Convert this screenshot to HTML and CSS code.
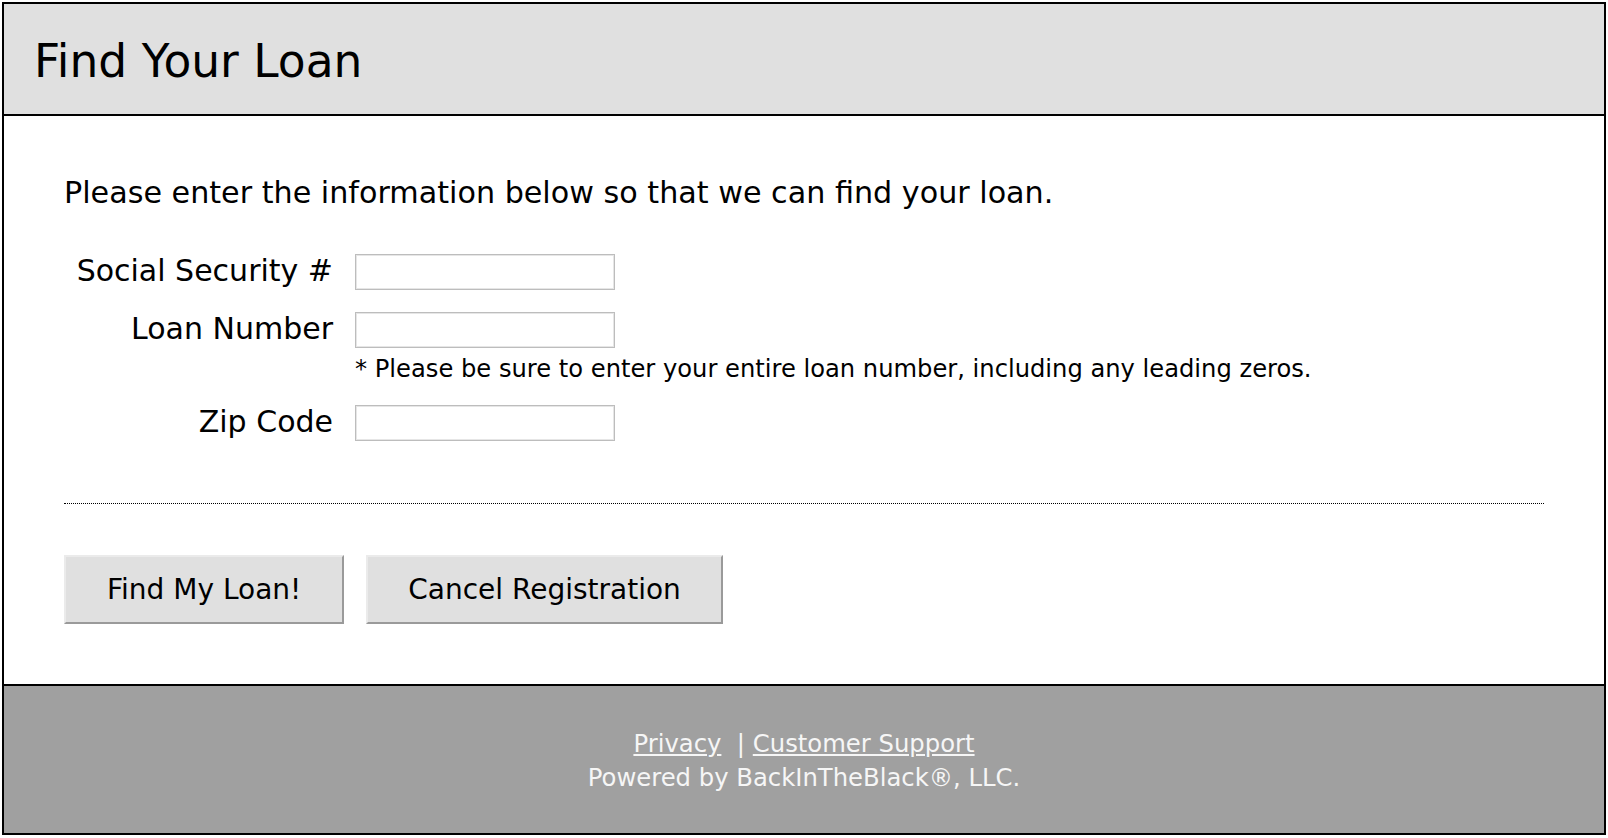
FILE: index.html
```html
<!DOCTYPE html>
<html lang="en">

<head>
    <meta charset="UTF-8">
    <meta name="viewport" content="width=device-width, initial-scale=1.0">
    <title>Find Your Loan</title>
    <link rel="stylesheet" href="styles.css">
</head>

<body>
    <div class="page">
        <div class="page_header">
            <h1>Find Your Loan</h1>
        </div>

        <form class="page_main" action="">
            <p class="intro">Please enter the information below so that we can find your loan.</p>

            <div class="fields">
                <label class="field_label" for="ssn">Social Security #</label>
                <div class="field_input">
                    <input type="text" id="ssn" name="ssn">
                </div>

                <label class="field_label" for="loan">Loan Number</label>
                <div class="field_input">
                    <input type="text" id="loan" name="loan">
                    <div class="field_note">* Please be sure to enter your entire loan number, including any leading zeros.</div>
                </div>

                <label class="field_label" for="zip">Zip Code</label>
                <div class="field_input">
                    <input type="text" id="zip" name="zip">
                </div>
            </div>

            <hr class="divider">

            <div class="buttons">
                <button type="submit" class="btn">Find My Loan!</button>
                <button type="button" class="btn">Cancel Registration</button>
            </div>
        </form>

        <div class="page_footer">
            <div><a href="#">Privacy</a>&nbsp; | <a href="#">Customer Support</a></div>
            <div>Powered by BackInTheBlack&reg;, LLC.</div>
        </div>
    </div>
</body>

</html>
```

FILE: styles.css
```css
* {
    box-sizing: border-box;
}

body {
    margin: 2px;
    font-family: "DejaVu Sans", Verdana, sans-serif;
    color: #000;
    background-color: #fff;
}

.page {
    height: 833px;
    border: 2px solid #000;
    display: flex;
    flex-direction: column;
}

.page_header {
    height: 112px;
    background-color: #e0e0e0;
    border-bottom: 2px solid #000;
    padding: 32px 30px 0;
}

.page_header h1 {
    margin: 0;
    font-size: 45.5px;
    font-weight: normal;
    line-height: 51px;
}

.page_main {
    flex: 1;
    padding: 60px 60px 0;
}

.intro {
    margin: 0 0 44px;
    font-size: 30.2px;
    line-height: 34px;
}

.fields {
    display: grid;
    grid-template-columns: 269px 1fr;
    column-gap: 22px;
    row-gap: 22px;
    align-items: start;
}

.field_label {
    padding-top: 2px;
    text-align: right;
    font-size: 30px;
    line-height: 30px;
}

.field_input input {
    display: block;
    width: 260px;
    height: 36px;
    margin: 0;
    border: 1px solid #bdbdbd;
    box-shadow: inset 0 0 0 1px #e6e6e6;
    background-color: #fff;
    font-family: inherit;
    font-size: 20px;
    padding: 0 6px;
}

.field_note {
    margin-top: 7px;
    font-size: 24.2px;
    line-height: 28px;
}

.divider {
    margin: 62px 0 0;
    border: 0;
    border-top: 1px dotted #000;
    height: 0;
}

.buttons {
    display: flex;
    gap: 22px;
    margin-top: 51px;
}

.btn {
    height: 69px;
    padding: 0 41px;
    font-family: inherit;
    font-size: 28px;
    line-height: 65px;
    color: #000;
    background-color: #e0e0e0;
    border: 2px solid;
    border-color: #ebebeb #9a9a9a #9a9a9a #ebebeb;
    cursor: pointer;
}

.btn + .btn {
    padding: 0 40px;
}

.page_footer {
    height: 149px;
    background-color: #a0a0a0;
    border-top: 2px solid #000;
    padding-top: 41px;
    text-align: center;
    font-size: 24.3px;
    line-height: 34px;
    color: #f6f6f6;
}

.page_footer a {
    color: #f6f6f6;
}
```
